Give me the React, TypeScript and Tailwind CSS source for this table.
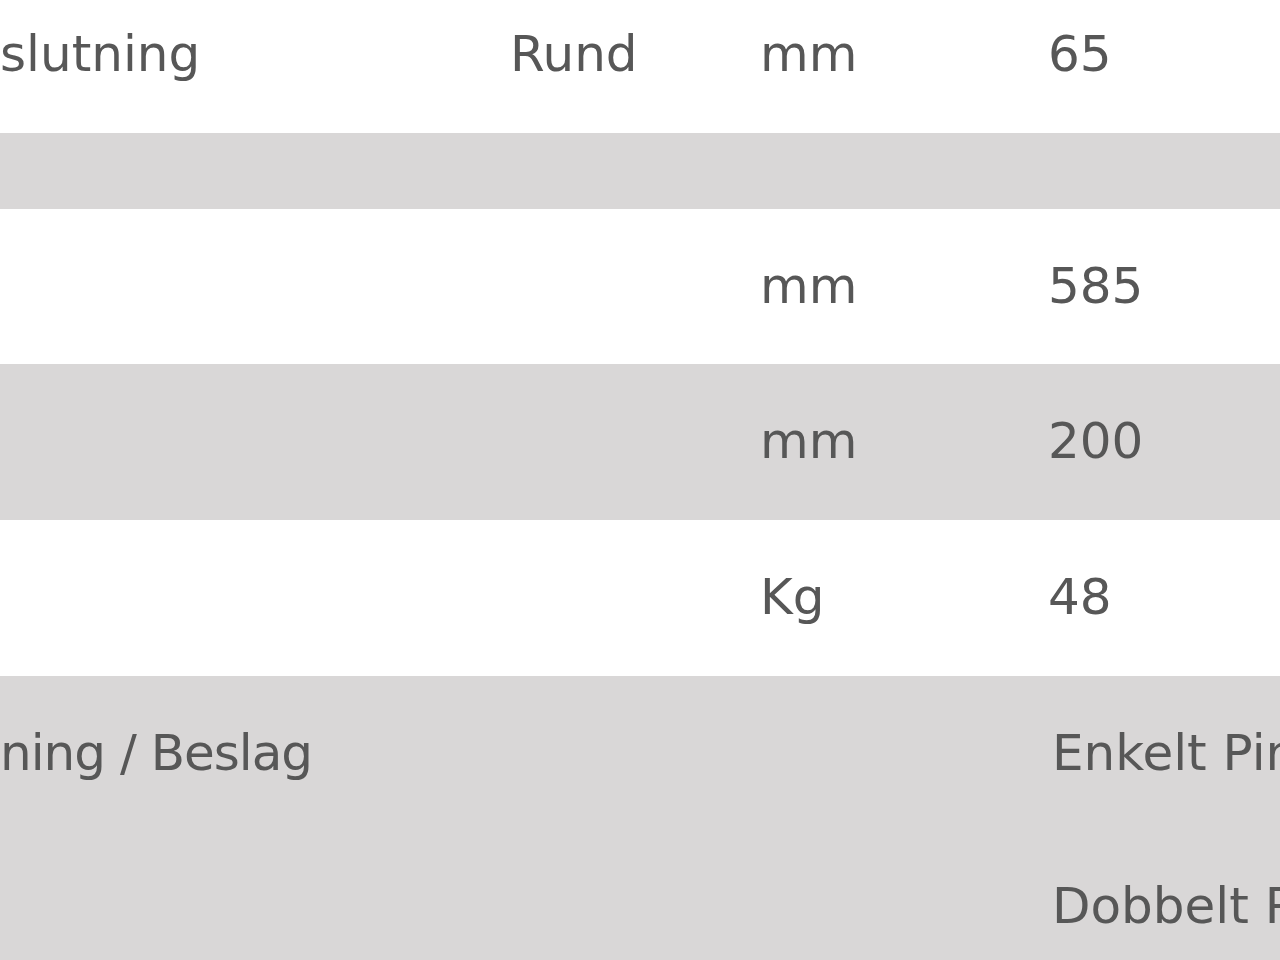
export default function App() {
  const cell = "leading-[79.67px] whitespace-nowrap";
  const row = "grid grid-cols-[510px_250px_288px_1fr] py-[38px]";
  return (
    <div
      className="w-[1280px] h-[960px] overflow-hidden bg-white text-[#575757]"
      style={{ fontFamily: '"DejaVu Sans", "Noto Sans", sans-serif' }}
    >
      <div className="-mt-[23px] text-[50px]">
        <div className={`${row} bg-white`}>
          <div className={cell}>slutning</div>
          <div className={cell}>Rund</div>
          <div className={cell}>mm</div>
          <div className={cell}>65</div>
        </div>
        <div className="h-[76px] bg-[#d9d7d7]" />
        <div className={`${row} bg-white`}>
          <div className={cell}></div>
          <div className={cell}></div>
          <div className={cell}>mm</div>
          <div className={cell}>585</div>
        </div>
        <div className={`${row} bg-[#d9d7d7]`}>
          <div className={cell}></div>
          <div className={cell}></div>
          <div className={cell}>mm</div>
          <div className={cell}>200</div>
        </div>
        <div className={`${row} bg-white`}>
          <div className={cell}></div>
          <div className={cell}></div>
          <div className={cell}>Kg</div>
          <div className={cell}>48</div>
        </div>
        <div className={`${row} bg-[#d9d7d7] h-[400px]`}>
          <div className={`${cell} tracking-[-1px]`}>ning / Beslag</div>
          <div className={cell}></div>
          <div className={cell}></div>
          <div className="flex flex-col gap-[74px] pl-[4px]">
            <div className={cell}>Enkelt Pind</div>
            <div className={cell}>Dobbelt Pind</div>
          </div>
        </div>
      </div>
    </div>
  );
}
